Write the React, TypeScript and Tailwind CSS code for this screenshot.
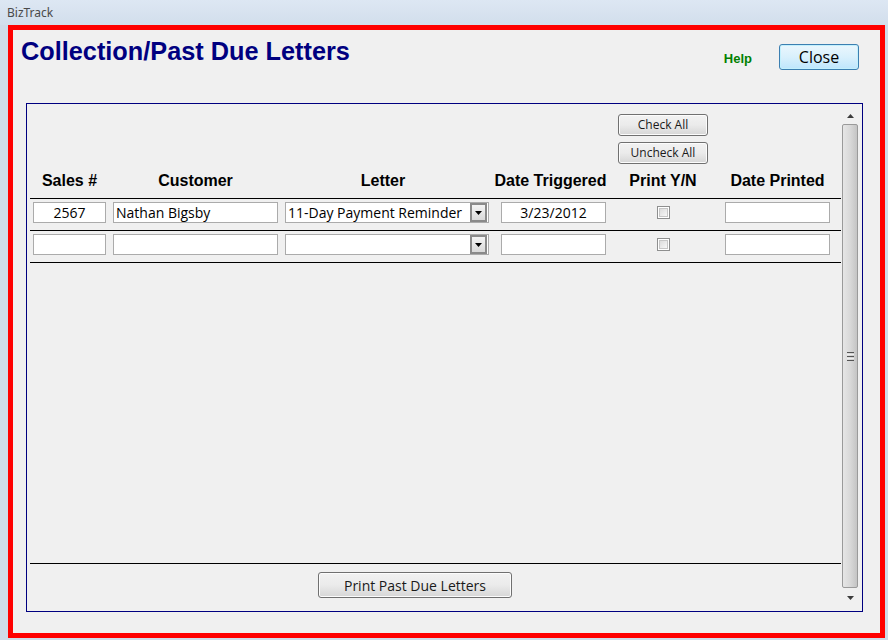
import React from "react";

const ui = { fontFamily: '"Open Sans", "Noto Sans", Arial, sans-serif' };
const bold = { fontFamily: '"Liberation Sans", Arial, sans-serif' };

function Btn({ children, className }: { children: React.ReactNode; className: string }) {
  return (
    <div
      className={
        "flex items-center justify-center rounded-[3px] border border-[#707070] bg-gradient-to-b from-[#f2f2f2] via-[#ebebeb] to-[#d6d6d6] text-[#1a1a1a] shadow-[inset_0_0_0_1px_#fcfcfc] " +
        className
      }
      style={ui}
    >
      {children}
    </div>
  );
}

function TextBox({ value, w, align }: { value?: string; w: string; align?: string }) {
  return (
    <div
      className={
        "h-[21px] border border-[#ababab] bg-white text-[14px] leading-[19px] text-black px-[2px] whitespace-nowrap overflow-hidden " +
        w +
        " " +
        (align || "")
      }
      style={ui}
    >
      {value || ""}
    </div>
  );
}

function Select({ value }: { value?: string }) {
  return (
    <div className="flex h-[21px] w-[204px] items-center border border-[#ababab] bg-white pl-[2px] pr-[1px]" style={ui}>
      <div className="flex-1 text-[14px] leading-[19px] text-black whitespace-nowrap overflow-hidden">{value || ""}</div>
      <div className="flex h-[19px] w-[17px] items-center justify-center border-2 border-[#8a8a8a] bg-gradient-to-b from-[#f4f4f4] to-[#d9d9d9]">
        <svg width="7" height="4" viewBox="0 0 7 4">
          <path d="M0 0h7L3.5 4z" fill="#000" />
        </svg>
      </div>
    </div>
  );
}

function Check() {
  return (
    <div className="flex h-[13px] w-[13px] items-center justify-center border border-[#8e8f8f] bg-white">
      <div className="h-[9px] w-[9px] border border-[#c6c6c6] bg-gradient-to-br from-[#dcdcdc] to-[#f7f7f7]" />
    </div>
  );
}

function Row({ data }: { data?: { sales: string; cust: string; letter: string; date: string } }) {
  return (
    <div className="flex h-[32px] items-start border-b border-black pt-[3px] pl-[3px]">
      <TextBox value={data?.sales} w="w-[73px]" align="text-center" />
      <div className="ml-[7px]">
        <TextBox value={data?.cust} w="w-[165px]" />
      </div>
      <div className="ml-[7px]">
        <Select value={data?.letter} />
      </div>
      <div className="ml-[12px]">
        <TextBox value={data?.date} w="w-[105px]" align="text-center" />
      </div>
      <div className="ml-[7px] flex w-[100px] justify-center pt-[4px]">
        <Check />
      </div>
      <div className="ml-[12px]">
        <TextBox w="w-[105px]" />
      </div>
    </div>
  );
}

function Header({ w, ml, children }: { w: string; ml: string; children: React.ReactNode }) {
  return (
    <div className={"flex justify-center text-[16px] font-bold text-black whitespace-nowrap " + w + " " + ml} style={bold}>
      {children}
    </div>
  );
}

function Scrollbar() {
  return (
    <div className="flex h-full w-[16px] flex-col">
      <div className="flex h-[17px] items-center justify-center">
        <svg width="7" height="4" viewBox="0 0 7 4">
          <path d="M3.5 0L7 4H0z" fill="#3c3c3c" />
        </svg>
      </div>
      <div className="flex flex-1 items-center justify-center rounded-[2px] border border-[#9a9a9a] bg-gradient-to-r from-[#e6e6e6] via-[#d9d9d9] to-[#c4c4c4]">
        <div className="flex flex-col gap-[1px]">
          <div className="h-[1px] w-[7px] bg-[#555]" />
          <div className="h-[1px] w-[7px] bg-[#eee]" />
          <div className="h-[1px] w-[7px] bg-[#555]" />
          <div className="h-[1px] w-[7px] bg-[#eee]" />
          <div className="h-[1px] w-[7px] bg-[#555]" />
        </div>
      </div>
      <div className="flex h-[19px] items-center justify-center">
        <svg width="7" height="4" viewBox="0 0 7 4">
          <path d="M0 0h7L3.5 4z" fill="#3c3c3c" />
        </svg>
      </div>
    </div>
  );
}

export default function App() {
  return (
    <div className="flex h-[640px] w-[888px] flex-col overflow-hidden bg-[#cfdbe9]">
      <div
        className="flex h-[25px] shrink-0 items-center bg-gradient-to-b from-[#dde7f3] to-[#d2deec] pl-[7px] text-[12px] text-[#4a4a4a]"
        style={{ fontFamily: '"Noto Sans", "Open Sans", Arial, sans-serif' }}
      >
        BizTrack
      </div>
      <div className="ml-[8px] h-[613px] w-[877px] border-[5px] border-[#ff0000] bg-[#f0f0f0]">
        <div className="flex h-[73px] items-start">
          <div className="ml-[8px] mt-[3px] text-[25.3px] font-bold text-[#000080]" style={bold}>
            Collection/Past Due Letters
          </div>
          <div className="ml-auto mt-[19px] text-[13px] font-bold text-[#008000]" style={bold}>
            Help
          </div>
          <div
            className="ml-[27px] mr-[21px] mt-[14px] flex h-[26px] w-[80px] items-center justify-center rounded-[3px] border border-[#3c7fb1] bg-gradient-to-b from-[#eaf6fd] via-[#d9f0fc] to-[#bee6fd] text-[16px] text-black shadow-[inset_0_0_0_1px_#c3f0fd]"
            style={ui}
          >
            Close
          </div>
        </div>
        <div className="ml-[13px] flex h-[509px] w-[837px] border border-[#000080]">
          <div className="flex flex-1 flex-col pl-[3px]">
            <div className="flex h-[94px] flex-col items-start">
              <div className="ml-[588px] mt-[10px] flex flex-col gap-[6px]">
                <Btn className="h-[22px] w-[90px] text-[12px]">Check All</Btn>
                <Btn className="h-[22px] w-[90px] text-[12px]">Uncheck All</Btn>
              </div>
              <div className="mt-[5px] flex items-center pl-[3px]">
                <Header w="w-[73px]" ml="">Sales #</Header>
                <Header w="w-[165px]" ml="ml-[7px]">Customer</Header>
                <Header w="w-[196px]" ml="ml-[7px]">Letter</Header>
                <Header w="w-[105px]" ml="ml-[17px]">Date Triggered</Header>
                <Header w="w-[100px]" ml="ml-[10px]">Print Y/N</Header>
                <Header w="w-[105px]" ml="ml-[12px]">Date Printed</Header>
              </div>
            </div>
            <div className="w-[811px] border-t border-black">
              <Row data={{ sales: "2567", cust: "Nathan Bigsby", letter: "11-Day Payment Reminder", date: "3/23/2012" }} />
              <Row />
            </div>
            <div className="flex-1" />
            <div className="flex h-[48px] w-[811px] border-t border-black pt-[8px]">
              <Btn className="ml-[288px] h-[26px] w-[194px] text-[14px]">Print Past Due Letters</Btn>
            </div>
          </div>
          <div className="mr-[4px] mt-[3px] mb-[4px]">
            <Scrollbar />
          </div>
        </div>
      </div>
    </div>
  );
}
